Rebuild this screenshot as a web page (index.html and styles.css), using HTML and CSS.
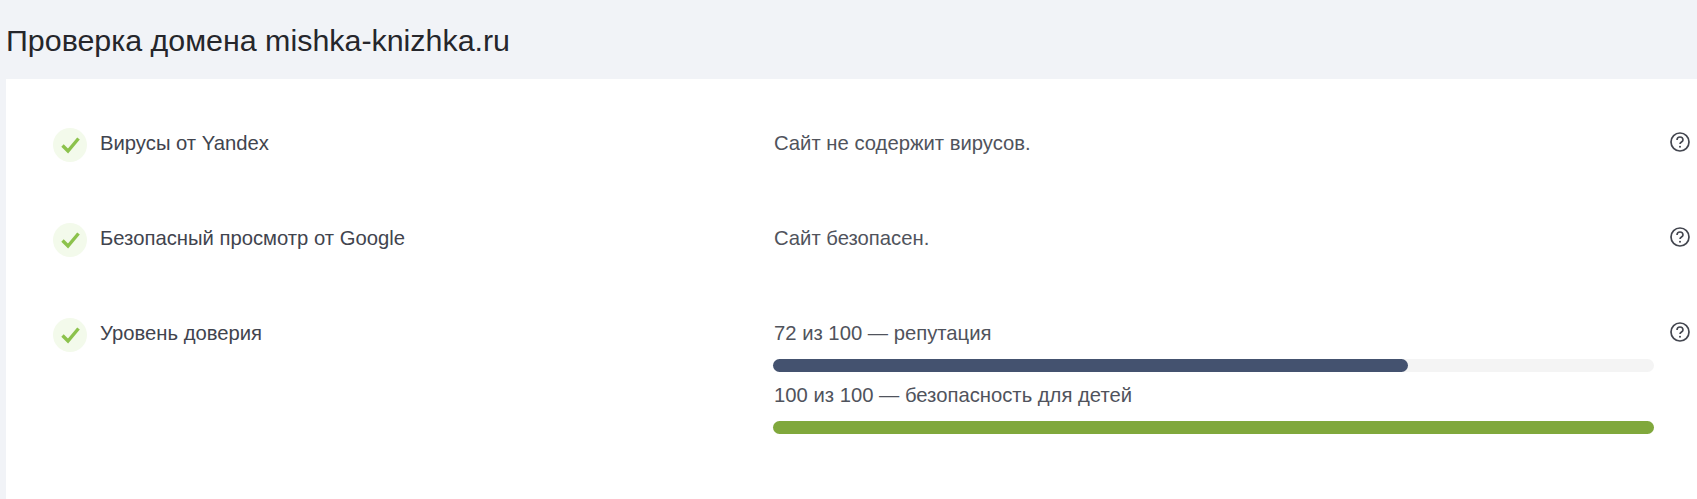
FILE: index.html
```html
<!DOCTYPE html>
<html lang="ru">
<head>
  <meta charset="UTF-8">
  <meta name="viewport" content="width=device-width, initial-scale=1.0">
  <title>Проверка домена mishka-knizhka.ru</title>
  <link rel="stylesheet" href="styles.css">
</head>
<body>

<h1 class="title">Проверка домена mishka-knizhka.ru</h1>

<div class="panel">
  <div class="row">
    <div class="status">
      <svg viewBox="0 0 34 34" width="34" height="34"><circle cx="17" cy="17" r="17" fill="#f3faeb"/><path d="M9.5 17.5l5.5 5.5L25.5 10.5" fill="none" stroke="#8cc24c" stroke-width="3.4"/></svg>
    </div>
    <div class="name">Вирусы от Yandex</div>
    <div class="result">Сайт не содержит вирусов.</div>
    <div class="help">
      <svg viewBox="0 0 20 20" width="20" height="20"><circle cx="10" cy="10" r="9" fill="none" stroke="#43464f" stroke-width="1.7"/><path d="M7 8a3 3 0 0 1 6 0c0 2-3 2-3 4" fill="none" stroke="#43464f" stroke-width="1.6"/><circle cx="10" cy="14.8" r="1" fill="#43464f"/></svg>
    </div>
  </div>

  <div class="row">
    <div class="status">
      <svg viewBox="0 0 34 34" width="34" height="34"><circle cx="17" cy="17" r="17" fill="#f3faeb"/><path d="M9.5 17.5l5.5 5.5L25.5 10.5" fill="none" stroke="#8cc24c" stroke-width="3.4"/></svg>
    </div>
    <div class="name">Безопасный просмотр от Google</div>
    <div class="result">Сайт безопасен.</div>
    <div class="help">
      <svg viewBox="0 0 20 20" width="20" height="20"><circle cx="10" cy="10" r="9" fill="none" stroke="#43464f" stroke-width="1.7"/><path d="M7 8a3 3 0 0 1 6 0c0 2-3 2-3 4" fill="none" stroke="#43464f" stroke-width="1.6"/><circle cx="10" cy="14.8" r="1" fill="#43464f"/></svg>
    </div>
  </div>

  <div class="row">
    <div class="status">
      <svg viewBox="0 0 34 34" width="34" height="34"><circle cx="17" cy="17" r="17" fill="#f3faeb"/><path d="M9.5 17.5l5.5 5.5L25.5 10.5" fill="none" stroke="#8cc24c" stroke-width="3.4"/></svg>
    </div>
    <div class="name">Уровень доверия</div>
    <div class="result">
      <div>72 из 100 — репутация</div>
      <div class="bar"><div class="fill fill-blue" style="width: 72.1%"></div></div>
      <div>100 из 100 — безопасность для детей</div>
      <div class="bar"><div class="fill fill-green" style="width: 100%"></div></div>
    </div>
    <div class="help">
      <svg viewBox="0 0 20 20" width="20" height="20"><circle cx="10" cy="10" r="9" fill="none" stroke="#43464f" stroke-width="1.7"/><path d="M7 8a3 3 0 0 1 6 0c0 2-3 2-3 4" fill="none" stroke="#43464f" stroke-width="1.6"/><circle cx="10" cy="14.8" r="1" fill="#43464f"/></svg>
    </div>
  </div>
</div>

</body>
</html>
```

FILE: styles.css
```css
body {
  margin: 0;
  height: 499px;
  overflow: hidden;
  font-family: "Liberation Sans", Arial, sans-serif;
  background-color: #f1f3f7;
}
.title {
  margin: 0;
  padding: 0 0 0 6px;
  height: 79px;
  line-height: 81px;
  font-size: 30.4px;
  font-weight: 400;
  color: #25262b;
}
.panel {
  margin-left: 6px;
  height: 420px;
  padding: 49px 0 0 47px;
  box-sizing: border-box;
  background-color: #fff;
}
.row {
  display: flex;
  align-items: flex-start;
  min-height: 95px;
  font-size: 20.25px;
  line-height: 30px;
  color: #50535c;
}
.status {
  width: 47px;
  height: 34px;
  flex-shrink: 0;
}
.name {
  width: 673px;
  flex-shrink: 0;
  color: #41444e;
}
.result {
  width: 881px;
  flex-shrink: 0;
  padding-left: 1px;
  box-sizing: border-box;
}
.help {
  margin-left: 16px;
  padding-top: 4px;
}
.help svg, .status svg {
  display: block;
}
.bar {
  height: 13px;
  margin: 11px 0 8px -1px;
  border-radius: 7px;
  background-color: #f4f4f4;
}
.fill {
  height: 100%;
  border-radius: 7px;
}
.fill-blue {
  background-color: #44526f;
}
.fill-green {
  background-color: #80a83c;
}
```
